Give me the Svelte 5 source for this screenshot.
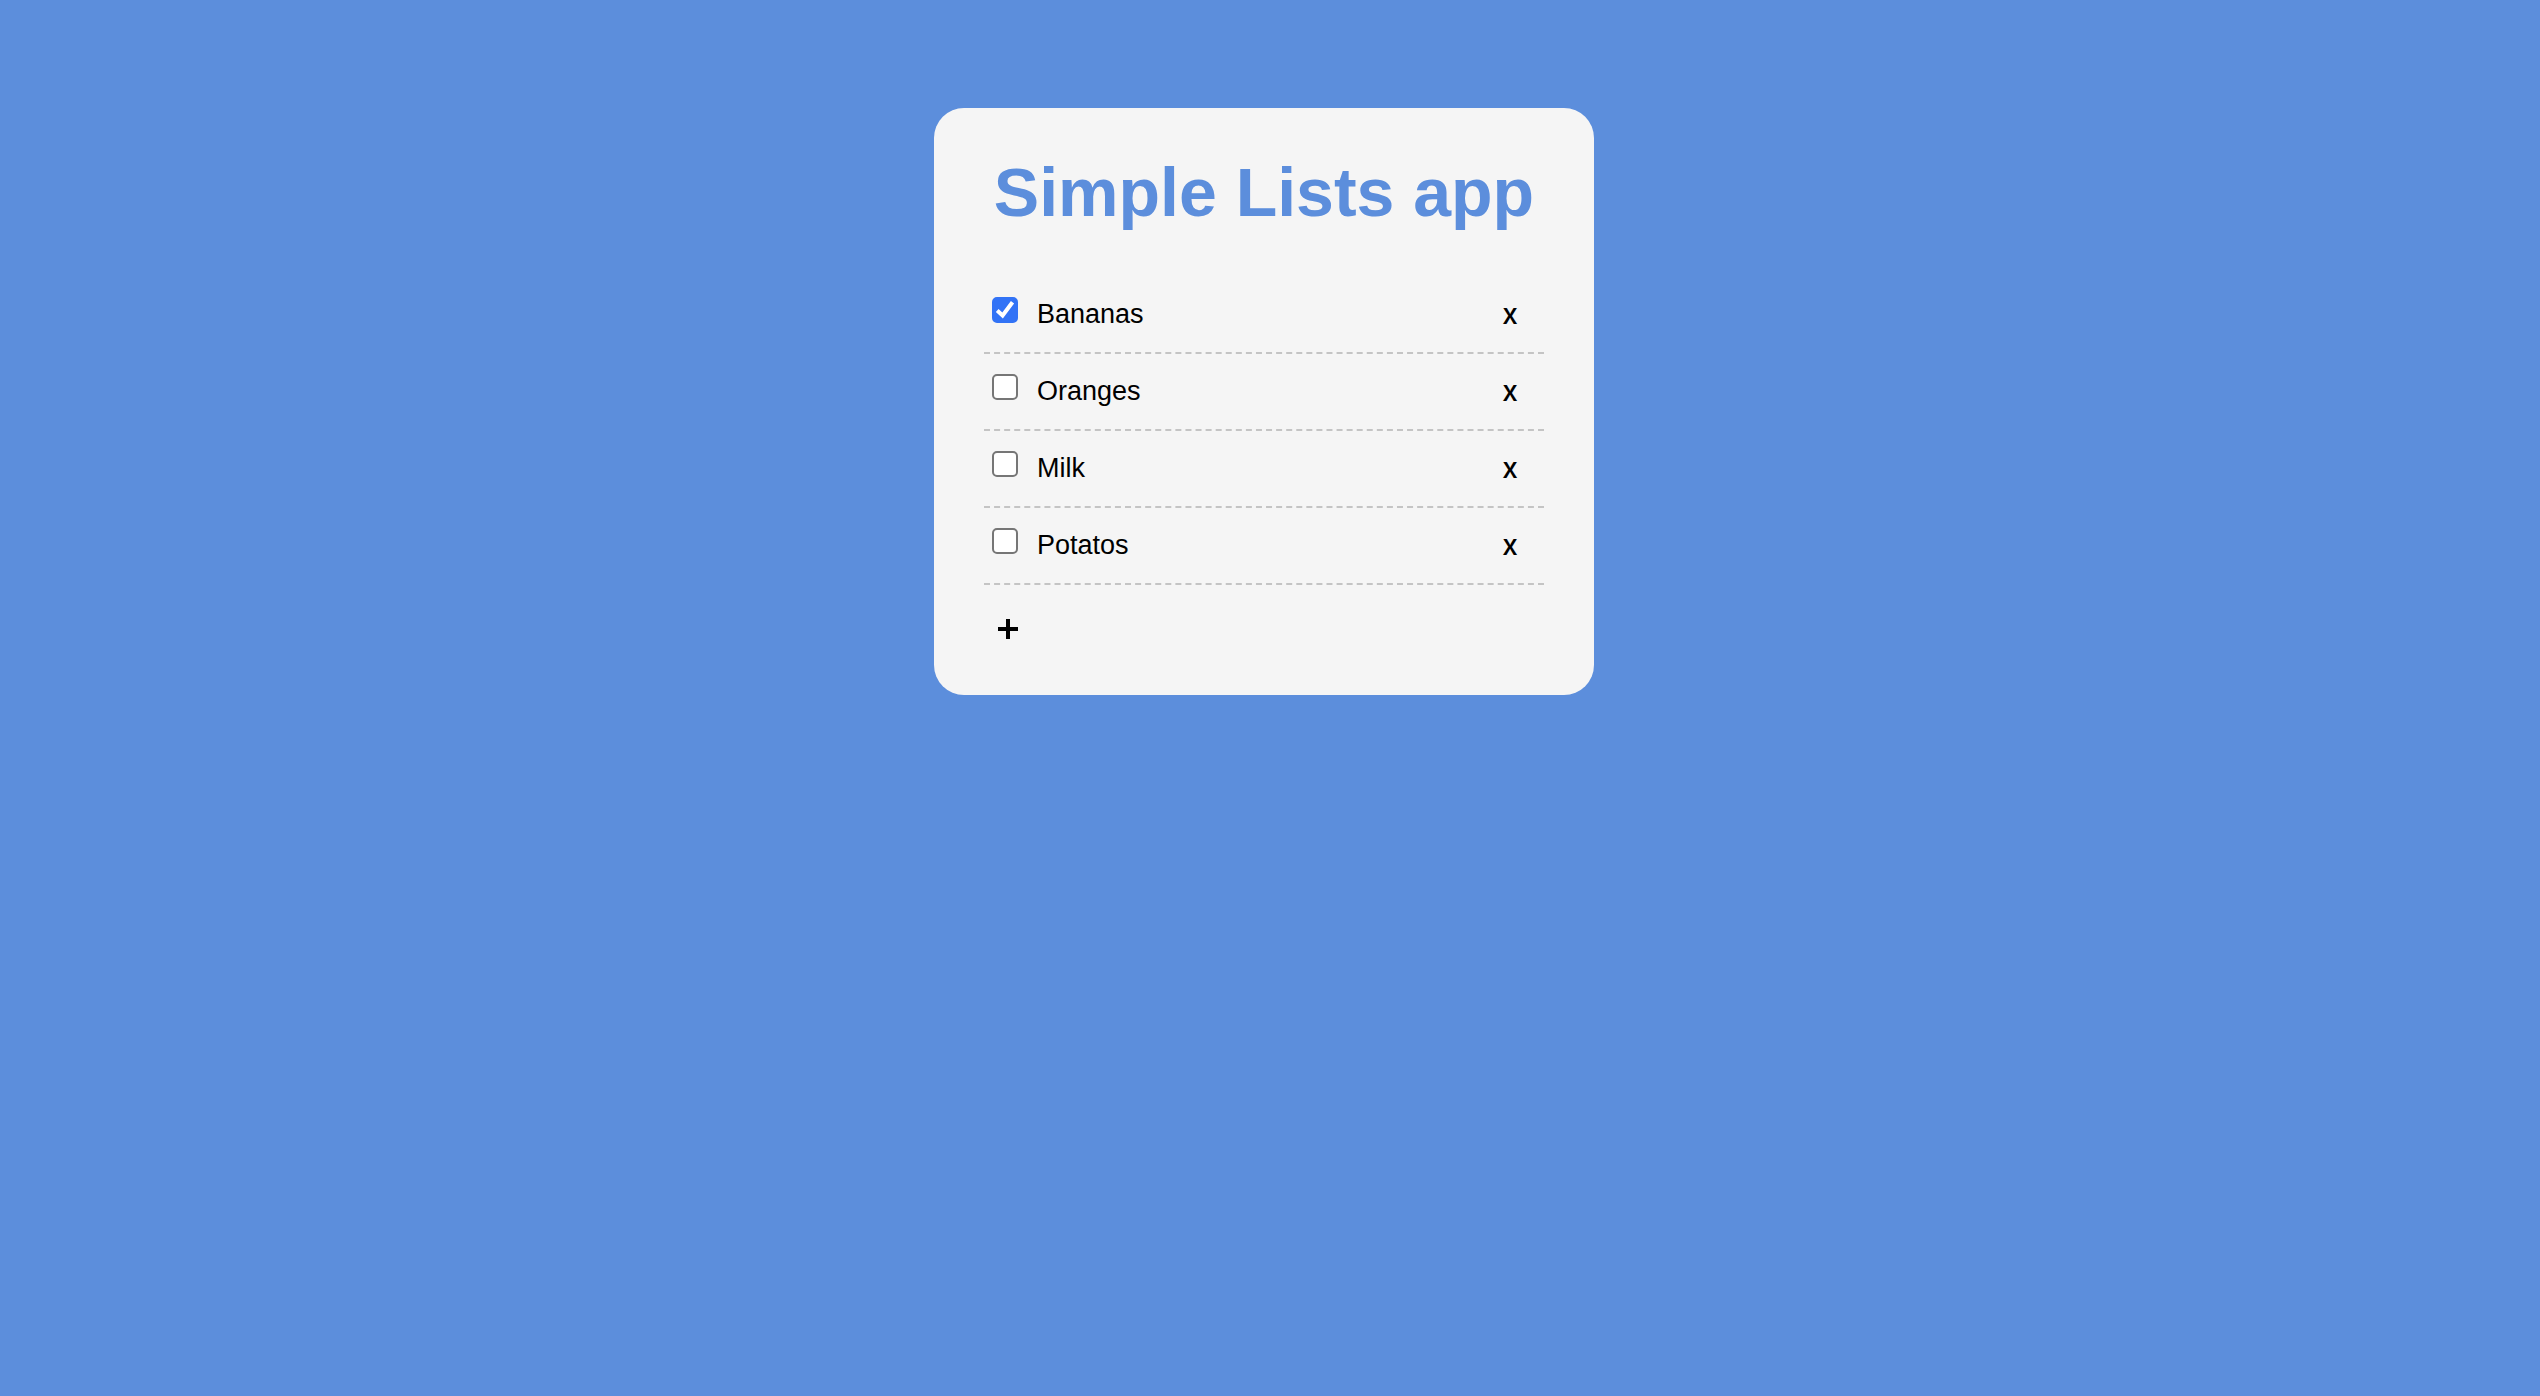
<script>
  let items = $state([
    { id: 1, name: 'Bananas', done: true },
    { id: 2, name: 'Oranges', done: false },
    { id: 3, name: 'Milk', done: false },
    { id: 4, name: 'Potatos', done: false }
  ]);
  let nextId = 5;

  function remove(id) {
    items = items.filter((item) => item.id !== id);
  }

  function add() {
    items.push({ id: nextId++, name: 'New item', done: false });
  }
</script>

<main>
  <section class="card">
    <h1>Simple Lists app</h1>
    <ul>
      {#each items as item (item.id)}
        <li>
          <input type="checkbox" id="item-{item.id}" bind:checked={item.done} />
          <label for="item-{item.id}">{item.name}</label>
          <button class="remove" type="button" aria-label="x, remove {item.name}" onclick={() => remove(item.id)}>x</button>
        </li>
      {/each}
    </ul>
    <button class="add" type="button" aria-label="Add item" onclick={add}>
      <svg viewBox="0 0 20 20" aria-hidden="true"><path d="M10 0V20M0 10H20" /></svg>
    </button>
  </section>
</main>

<style>
  :global(body) {
    background: #5c8edc;
  }

  main {
    display: flex;
    justify-content: center;
    padding: 108px 12px 40px 0;
    font-family: 'Liberation Sans', Arial, sans-serif;
    color: #000;
  }

  .card {
    box-sizing: border-box;
    width: 100%;
    max-width: 660px;
    padding: 44px 50px;
    border-radius: 30px;
    background: #f5f5f5;
  }

  h1 {
    margin: 0 0 45px;
    color: #5c8edc;
    font-size: 68px;
    line-height: 80px;
    text-align: center;
  }

  ul {
    margin: 0;
    padding: 0;
    list-style: none;
  }

  li {
    display: flex;
    align-items: flex-start;
    box-sizing: border-box;
    height: 77px;
    padding: 20px 24px 0 8px;
    border-bottom: 2px dashed #c4c4c4;
  }

  input {
    appearance: none;
    flex: none;
    box-sizing: border-box;
    width: 26px;
    height: 26px;
    margin: 0 19px 0 0;
    border: 2px solid #767676;
    border-radius: 5px;
    background: #fff;
  }

  input:checked {
    border-color: #3273f6;
    background: #3273f6 url("data:image/svg+xml,%3Csvg xmlns='http://www.w3.org/2000/svg' viewBox='0 0 26 26'%3E%3Cpath d='M5.2 13.5l5.4 5L20.5 5.3' fill='none' stroke='white' stroke-width='4'/%3E%3C/svg%3E") center / 26px 26px no-repeat;
  }

  label {
    flex: 1;
    font-size: 27px;
    line-height: 34px;
  }

  button {
    padding: 0;
    border: 0;
    background: none;
    color: inherit;
    cursor: pointer;
  }

  .remove {
    width: 20px;
    font-family: Inter, sans-serif;
    font-size: 28px;
    font-weight: 500;
    line-height: 34px;
  }

  .add {
    display: block;
    margin: 34px 0 12px 14px;
  }

  .add svg {
    display: block;
    width: 20px;
    height: 20px;
    fill: none;
    stroke: currentColor;
    stroke-width: 4;
  }
</style>
